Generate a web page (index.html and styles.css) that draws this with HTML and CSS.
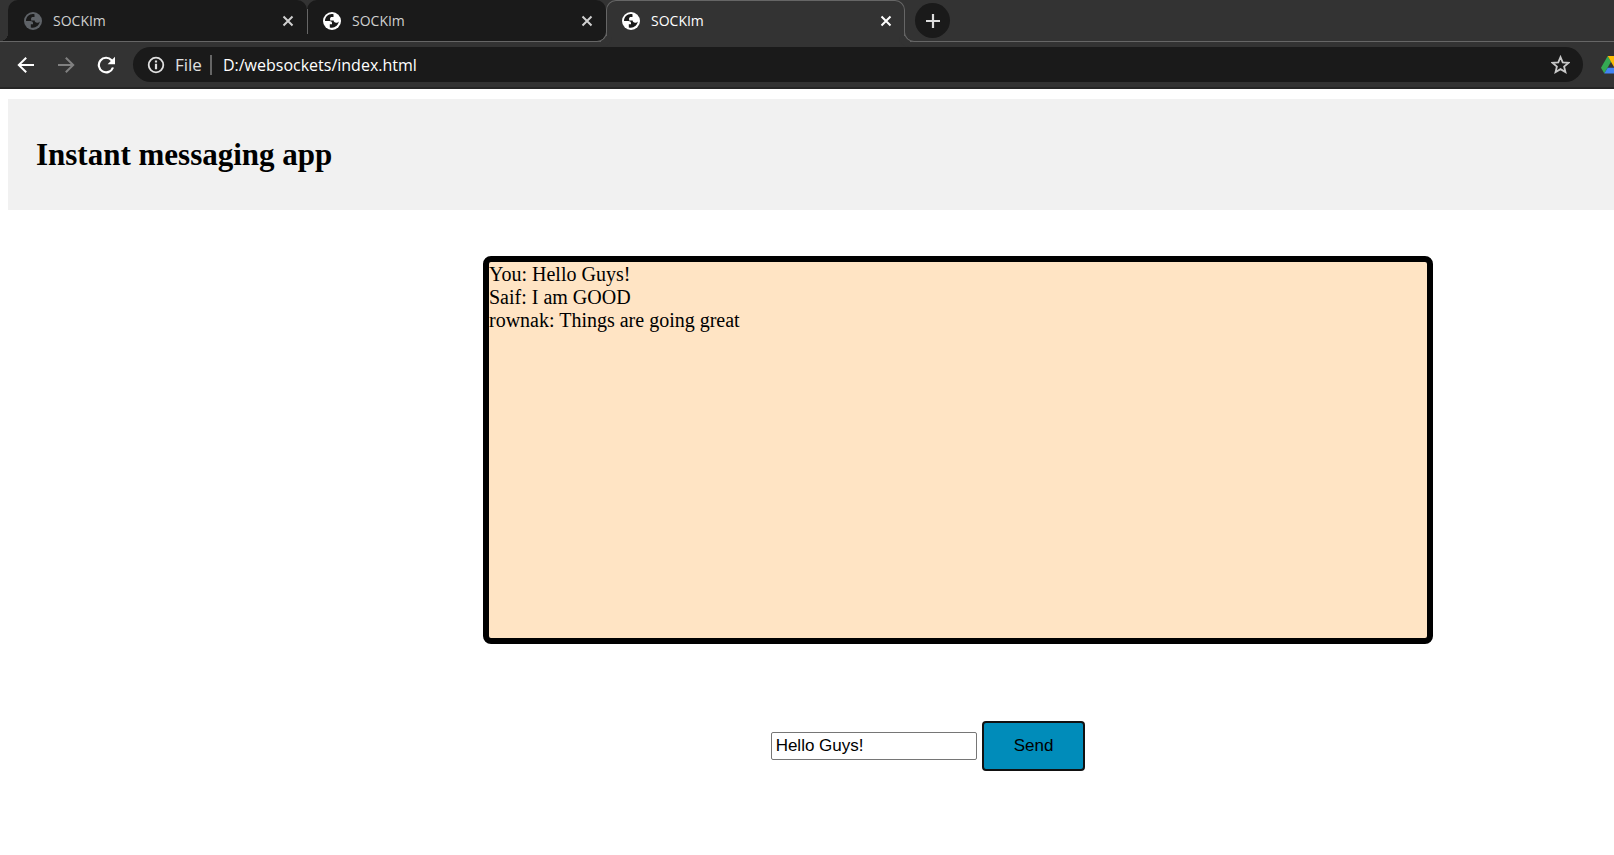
FILE: index.html
```
<!DOCTYPE html>
<html lang="en">
<head>
<meta charset="utf-8">
<title>SOCKIm</title>
<link rel="stylesheet" href="styles.css">
</head>
<body>
<svg class="defs" aria-hidden="true">
  <symbol id="globe" viewBox="0 0 18 18">
    <circle cx="9" cy="9" r="9" fill="currentColor"/>
    <path class="land" d="M10.500 2.300C6 1.200 2 4.500 2 9h4.300c1.700 0 2.700.9 2.700 2v1.200H6.800v3.200c4.200 1.400 8.400-1.600 9-5.800-.6.900-1.500 1.200-2.600 1.200-1.700 0-2.500-.9-2.500-2.200H7.100V6.500c0-1 .7-1.600 1.800-1.600h1.600z"/>
  </symbol>
  <symbol id="close" viewBox="0 0 12 12">
    <path d="M1.500 1.500l9 9M10.500 1.500l-9 9" fill="none" stroke="currentColor" stroke-width="2"/>
  </symbol>
</svg>

<header class="browser">
  <nav class="tabs" aria-label="Tabs">
    <div class="tab tab-dim">
      <svg class="favicon"><use href="#globe"/></svg>
      <span class="tab-title">SOCKIm</span>
      <button class="tab-close" type="button" aria-label="Close tab"><svg><use href="#close"/></svg></button>
    </div>
    <div class="tab tab-divided">
      <svg class="favicon"><use href="#globe"/></svg>
      <span class="tab-title">SOCKIm</span>
      <button class="tab-close" type="button" aria-label="Close tab"><svg><use href="#close"/></svg></button>
    </div>
    <div class="tab tab-active">
      <svg class="favicon"><use href="#globe"/></svg>
      <span class="tab-title">SOCKIm</span>
      <button class="tab-close" type="button" aria-label="Close tab"><svg><use href="#close"/></svg></button>
    </div>
    <button class="new-tab" type="button" aria-label="New tab">
      <svg viewBox="0 0 16 16"><path d="M8 1v14M1 8h14" stroke="currentColor" stroke-width="2.200"/></svg>
    </button>
  </nav>
  <div class="toolbar">
    <button class="tool" type="button" aria-label="Back">
      <svg viewBox="0 0 18 18"><path d="M17 9H2M9.200 1.700L1.800 9l7.400 7.300" fill="none" stroke="currentColor" stroke-width="2"/></svg>
    </button>
    <button class="tool tool-off" type="button" aria-label="Forward">
      <svg viewBox="0 0 18 18"><path d="M1 9h15M8.800 1.700L16.200 9l-7.400 7.300" fill="none" stroke="currentColor" stroke-width="2"/></svg>
    </button>
    <button class="tool" type="button" aria-label="Reload">
      <svg viewBox="0 0 18 18"><path d="M16 11.500A7.300 7.300 0 1 1 14.600 4.200L16 5.700" fill="none" stroke="currentColor" stroke-width="2.200"/><path d="M18 .8v7.400h-7.400z" fill="currentColor"/></svg>
    </button>
    <div class="address">
      <svg class="info" viewBox="0 0 18 18"><circle cx="9" cy="9" r="7.300" fill="none" stroke="currentColor" stroke-width="1.800"/><path d="M9 4.400v2M9 7.800v5.400" stroke="currentColor" stroke-width="2.200"/></svg>
      <label class="scheme" for="url">File</label>
      <input class="url" id="url" type="text" value="D:/websockets/index.html">
      <button class="star" type="button" aria-label="Bookmark this tab">
        <svg viewBox="0 0 18 18"><path d="M9 2l2.100 5 5.400.4-4.100 3.500 1.300 5.300L9 13.400l-4.700 2.800 1.300-5.300L1.500 7.400 6.900 7z" fill="none" stroke="currentColor" stroke-width="1.700"/></svg>
      </button>
    </div>
    <svg class="drive" viewBox="0 0 20 18" aria-hidden="true">
      <path d="M6.700 0L0 11.700l3.300 5.800L10 5.800z" fill="#34a853"/>
      <path d="M6.700 0h6.600L20 11.700h-6.600z" fill="#fbbc04"/>
      <path d="M6.700 11.700H20l-3.300 5.800H3.300z" fill="#4285f4"/>
    </svg>
  </div>
</header>

<div class="page">
  <header class="banner"><h1>Instant messaging app</h1></header>
  <main class="chat">
    <section class="messages" aria-label="Messages">
      <div>You: Hello Guys!</div>
      <div>Saif: I am GOOD</div>
      <div>rownak: Things are going great</div>
    </section>
    <form class="composer">
      <input class="message-input" type="text" aria-label="Message" value="Hello Guys!">
      <button class="send" type="button">Send</button>
    </form>
  </main>
</div>
</body>
</html>
```
FILE: styles.css
```
* {
  box-sizing: border-box;
}

body {
  margin: 0;
  background: #fff;
  color: #000;
  font-family: "Liberation Serif", serif;
  font-size: 20px;
  line-height: 23px;
  overflow-x: hidden;
}

button {
  padding: 0;
  border: 0;
  background: none;
  color: inherit;
}

button svg {
  display: block;
}

.defs {
  position: absolute;
  width: 0;
  height: 0;
}

.browser {
  background: #333;
  color: #fff;
  font-family: "Open Sans", sans-serif;
}

.tabs {
  display: flex;
  height: 42px;
  padding-left: 8px;
  box-shadow: inset 0 -1px #666;
}

.tab {
  position: relative;
  display: flex;
  align-items: center;
  flex: 0 1 299px;
  height: 41px;
  padding: 0 13px 0 16px;
  border-radius: 10px 10px 0 0;
  background: #1a1a1a;
  color: #d0d0d0;
  font-size: 14px;
}

.favicon {
  width: 18px;
  height: 18px;
  margin-right: 11px;
  color: #fff;
}

.land {
  fill: #1a1a1a;
}

.tab-dim .favicon {
  color: #5f6368;
}

/* Flared foot of the first tab */
.tab-dim::before {
  content: "";
  position: absolute;
  right: 100%;
  bottom: 0;
  width: 8px;
  height: 8px;
  background: radial-gradient(circle at 0 0, transparent 8px, #1a1a1a 8px);
}

.tab-title {
  flex: 1;
}

.tab-close svg {
  width: 12px;
  height: 12px;
}

.tab-divided::before {
  content: "";
  position: absolute;
  left: 0;
  top: 9px;
  width: 1px;
  height: 25px;
  background: #666;
}

.tab-active {
  height: 42px;
  padding: 0 12px 2px 15px;
  border: 1px solid #666;
  border-bottom: 0;
  background: #333;
  color: #fff;
}

/* Rounded feet joining the active tab to the strip line */
.tab-active::before,
.tab-active::after {
  content: "";
  position: absolute;
  bottom: 0;
  width: 10px;
  height: 10px;
  border: 0 solid #666;
  border-bottom-width: 1px;
}

.tab-active::before {
  right: 100%;
  border-right-width: 1px;
  border-bottom-right-radius: 10px;
  background: #1a1a1a;
  box-shadow: 5px 5px #333;
}

.tab-active::after {
  left: 100%;
  border-left-width: 1px;
  border-bottom-left-radius: 10px;
  background: #333;
  box-shadow: -5px 5px #333;
}

.new-tab {
  display: grid;
  place-items: center;
  width: 35px;
  height: 35px;
  margin: 3px 0 0 10px;
  border-radius: 50%;
  background: #1a1a1a;
  color: #ddd;
}

.new-tab svg {
  width: 16px;
  height: 16px;
}

.toolbar {
  display: flex;
  align-items: center;
  height: 47px;
  padding-left: 17px;
  border-bottom: 2px solid #262626;
  overflow: hidden;
}

.tool {
  flex: none;
  margin-right: 22px;
}

.tool svg {
  width: 18px;
  height: 18px;
}

.tool-off {
  color: #808080;
}

.address {
  display: flex;
  align-items: center;
  flex: 1;
  height: 35px;
  margin-right: 18px;
  margin-left: -4px;
  padding: 0 13px 0 14px;
  border-radius: 18px;
  background: #1a1a1a;
  font-size: 17px;
}

.info {
  width: 18px;
  height: 18px;
  color: #e0e0e0;
}

.scheme {
  margin-left: 10px;
  padding-right: 8px;
  border-right: 2px solid #666;
  line-height: 20px;
  color: #e0e0e0;
}

.url {
  flex: 1;
  min-width: 0;
  margin-left: 11px;
  padding: 0;
  border: 0;
  outline: 0;
  background: none;
  color: #fff;
  font: 16px "Open Sans", sans-serif;
}

.star {
  color: #c8c8c8;
}

.star svg {
  width: 19px;
  height: 19px;
}

.drive {
  flex: none;
  width: 20px;
  height: 18px;
  margin-right: -7px;
}

.page {
  padding: 10px 0 0 8px;
}

.banner {
  padding: 38px 28px;
  background: #f1f1f1;
}

.banner h1 {
  margin: 0;
  font-size: 31px;
  line-height: 35px;
}

/* The message column sits right of centre, with a narrower right gutter. */
.chat {
  display: grid;
  grid-template-columns: 475fr 950fr 181fr;
  padding-top: 46px;
}

.messages,
.composer {
  grid-column: 2;
}

.messages {
  min-height: 388px;
  padding-top: 1px;
  border: 6px solid #000;
  border-radius: 8px;
  background: #ffe4c4;
}

.composer {
  display: flex;
  justify-content: center;
  align-items: center;
  gap: 5px;
  margin-top: 77px;
  padding-right: 60px;
}

.message-input {
  width: 206px;
  height: 28px;
  padding: 0 4px;
  border: 1px solid #767676;
  border-radius: 2px;
  font: 17px "Liberation Sans", sans-serif;
}

.send {
  padding: 13px 30px;
  border: 2px solid #111;
  border-radius: 4px;
  background: #008cba;
  font: 17px/20px "Liberation Sans", sans-serif;
}
```
